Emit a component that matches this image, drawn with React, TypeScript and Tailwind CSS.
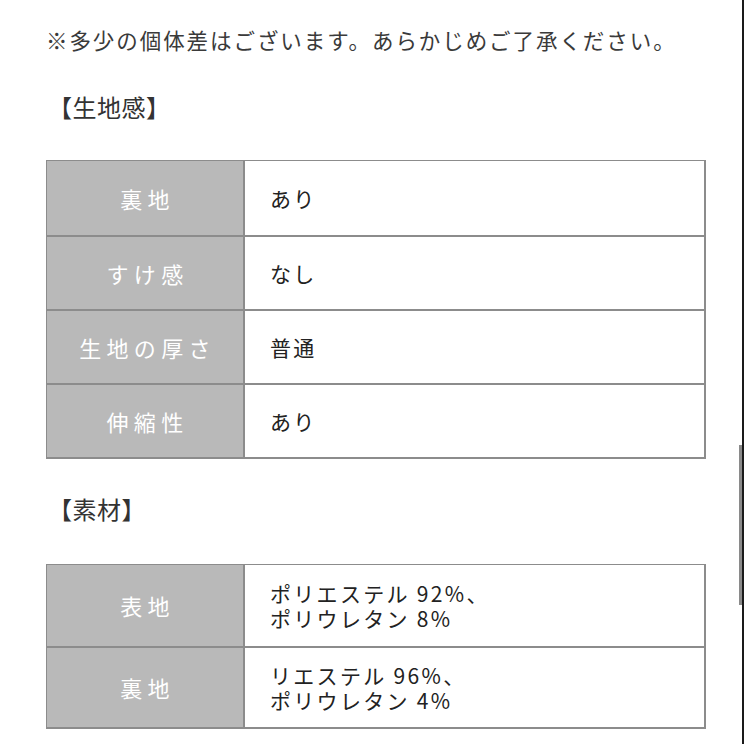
const font = { fontFamily: '"Noto Sans CJK JP", "Noto Sans", sans-serif' };

const texture = [
  { label: "裏地", value: ["あり"] },
  { label: "すけ感", value: ["なし"] },
  { label: "生地の厚さ", value: ["普通"] },
  { label: "伸縮性", value: ["あり"] },
];

const material = [
  { label: "表地", value: ["ポリエステル 92%、", "ポリウレタン 8%"] },
  { label: "裏地", value: ["リエステル 96%、", "ポリウレタン 4%"] },
];

type Row = { label: string; value: string[] };

const SpecTable = ({ rows, rowH }: { rows: Row[]; rowH: string }) => (
  <div className="border border-[#8c8c8c] border-b-2 border-r-2">
    {rows.map((r, i) => (
      <div key={i} className={`flex ${rowH} ${i > 0 ? "border-t-2 border-[#8c8c8c]" : ""}`}>
        <div className="w-[198px] shrink-0 bg-[#b9b9b9] border-r-2 border-[#8c8c8c] flex items-center justify-center text-white text-[22px] tracking-[0.24em] pl-[5px]">
          {r.label}
        </div>
        <div className="flex-1 bg-white flex flex-col justify-center pl-[25px] text-[#222] text-[21px] leading-[25px] tracking-[0.11em]">
          {r.value.map((v, j) => (
            <span key={j}>{v}</span>
          ))}
        </div>
      </div>
    ))}
  </div>
);

export default function App() {
  return (
    <div className="relative w-[744px] h-[744px] overflow-hidden bg-white flex" style={font}>
      <div className="flex-1 pl-[46px] pr-[33px]">
        <p className="mt-[24px] text-[21.5px] leading-[32px] text-[#3a3a3a] tracking-[0.09em]">
          ※多少の個体差はございます。あらかじめご了承ください。
        </p>
        <h2 className="mt-[34px] ml-[2px] text-[24px] leading-[34px] text-[#333] tracking-[0.02em]">【生地感】</h2>
        <div className="mt-[36px]">
          <SpecTable rows={texture} rowH="h-[74px]" />
        </div>
        <h2 className="mt-[33px] ml-[2px] text-[24px] leading-[34px] text-[#333] tracking-[0.02em]">【素材】</h2>
        <div className="mt-[38px]">
          <SpecTable rows={material} rowH="h-[81px]" />
        </div>
      </div>
      <div className="relative w-[5px] shrink-0 flex justify-end">
        <div className="absolute left-0 top-[445px] h-[160px] w-[3px] bg-[#8a8a8a]" />
        <div className="w-[2px] h-full bg-[#1a1a1a]" />
      </div>
    </div>
  );
}
